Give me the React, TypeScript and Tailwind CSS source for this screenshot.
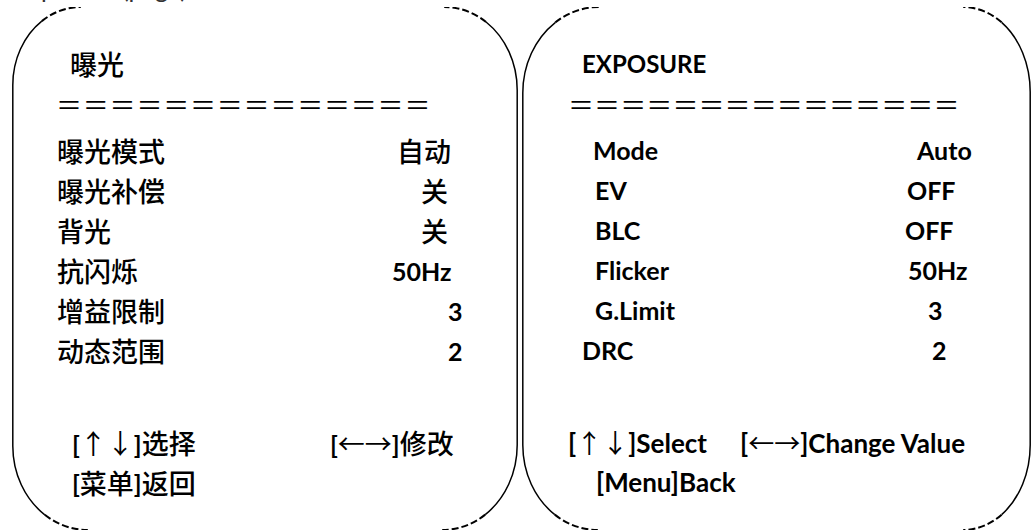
import React from "react";

const LATF = "font-['Lato','Noto_Sans_CJK_SC',sans-serif] font-bold";
const LAT = `${LATF} text-[25px]`;
const CJKF = "font-['Noto_Sans_CJK_SC',sans-serif]";
const CJK = `${CJKF} font-medium text-[27px]`;

type Corner = [number, number];

function pt(cx: number, cy: number, rx: number, ry: number, deg: number) {
  const r = (deg * Math.PI) / 180;
  return [cx + rx * Math.cos(r), cy + ry * Math.sin(r)];
}

function arc(cx: number, cy: number, rx: number, ry: number, a0: number, a1: number) {
  const [x0, y0] = pt(cx, cy, rx, ry, a0);
  const [x1, y1] = pt(cx, cy, rx, ry, a1);
  const sweep = a1 > a0 ? 1 : 0;
  return `M ${x0.toFixed(2)} ${y0.toFixed(2)} A ${rx} ${ry} 0 0 ${sweep} ${x1.toFixed(2)} ${y1.toFixed(2)}`;
}

function Outline({ w, h, tl, tr, bl, br }: { w: number; h: number; tl: Corner; tr: Corner; bl: Corner; br: Corner }) {
  const s = 0.8;
  const L = s;
  const R = w - s;
  const solid = [
    arc(L + tl[0], tl[1], tl[0], tl[1], 180, 235),
    arc(R - tr[0], tr[1], tr[0], tr[1], 360, 305),
    arc(L + bl[0], h - bl[1], bl[0], bl[1], 180, 125),
    arc(R - br[0], h - br[1], br[0], br[1], 0, 55),
    `M ${L} ${tl[1]} L ${L} ${h - bl[1]}`,
    `M ${R} ${tr[1]} L ${R} ${h - br[1]}`,
  ];
  const dashed = [
    arc(L + tl[0], tl[1], tl[0], tl[1], 235, 270),
    arc(R - tr[0], tr[1], tr[0], tr[1], 305, 270),
    arc(L + bl[0], h - bl[1], bl[0], bl[1], 125, 90),
    arc(R - br[0], h - br[1], br[0], br[1], 55, 90),
  ];
  return (
    <svg className="absolute left-0 top-0 pointer-events-none" width={w} height={h} viewBox={`0 0 ${w} ${h}`}>
      {solid.map((d, i) => (
        <path key={i} d={d} fill="none" stroke="#000" strokeWidth={1.5} />
      ))}
      {dashed.map((d, i) => (
        <path key={"d" + i} d={d} fill="none" stroke="#000" strokeWidth={2} strokeDasharray="7 3" />
      ))}
    </svg>
  );
}

const EQ_LEFT = "＝".repeat(14);
const EQ_RIGHT = "＝".repeat(15);

export default function App() {
  return (
    <div className="w-[1031px] h-[531px] bg-white overflow-hidden text-black">
      <div className="h-[7px] overflow-hidden">
        <div className="font-['Lato',sans-serif] text-[25px] text-[#333] leading-[27px] -mt-[25px] pl-[14px]">Exposure (page)</div>
      </div>
      <div className="flex">
        {/* Left panel */}
        <div className="relative w-[506px] h-[523px] ml-[12px] shrink-0">
          <Outline w={506} h={523} tl={[68, 78]} tr={[73, 83]} bl={[75, 84]} br={[75, 85]} />
          <div className="flex flex-col pt-[37px]">
            <div className={`${CJK} h-[40px] leading-[40px] pl-[58px]`}>曝光</div>
            <div className={`${CJKF} font-normal text-[26px] tracking-[0.8px] h-[40px] leading-[40px] pl-[44px]`}>{EQ_LEFT}</div>
            <div className="h-[7px]" />
            <div className="flex h-[40px] leading-[40px] pl-[45px]">
              <span className={`${CJK} w-[340px]`}>曝光模式</span>
              <span className={`${CJK}`}>自动</span>
            </div>
            <div className="flex h-[40px] leading-[40px] pl-[45px]">
              <span className={`${CJK} w-[364px]`}>曝光补偿</span>
              <span className={`${CJK}`}>关</span>
            </div>
            <div className="flex h-[40px] leading-[40px] pl-[45px]">
              <span className={`${CJK} w-[364px]`}>背光</span>
              <span className={`${CJK}`}>关</span>
            </div>
            <div className="flex h-[40px] leading-[40px] pl-[45px]">
              <span className={`${CJK} w-[335px]`}>抗闪烁</span>
              <span className={`${LAT}`}>50Hz</span>
            </div>
            <div className="flex h-[40px] leading-[40px] pl-[45px]">
              <span className={`${CJK} w-[391px]`}>增益限制</span>
              <span className={`${LAT}`}>3</span>
            </div>
            <div className="flex h-[40px] leading-[40px] pl-[45px]">
              <span className={`${CJK} w-[391px]`}>动态范围</span>
              <span className={`${LAT}`}>2</span>
            </div>
            <div className="h-[52px]" />
            <div className="flex h-[40px] leading-[40px] pl-[60px]">
              <span className="w-[258px] whitespace-nowrap">
                <span className={LAT}>[</span>
                <span className={`${CJKF} font-normal text-[27px]`}>↑↓</span>
                <span className={LAT}>]</span>
                <span className={CJK}>选择</span>
              </span>
              <span className="whitespace-nowrap">
                <span className={LAT}>[</span>
                <span className={`${CJKF} font-normal text-[27px]`}>←→</span>
                <span className={LAT}>]</span>
                <span className={CJK}>修改</span>
              </span>
            </div>
            <div className="flex h-[40px] leading-[40px] pl-[60px] whitespace-nowrap">
              <span className={LAT}>[</span>
              <span className={CJK}>菜单</span>
              <span className={LAT}>]</span>
              <span className={CJK}>返回</span>
            </div>
          </div>
        </div>

        {/* Right panel */}
        <div className="relative w-[509px] h-[523px] ml-[4px] shrink-0">
          <Outline w={509} h={523} tl={[76, 86]} tr={[67, 85]} bl={[75, 85]} br={[67, 85]} />
          <div className="flex flex-col pt-[37px]">
            <div className={`${LATF} text-[24px] h-[40px] leading-[40px] pl-[60px]`}>EXPOSURE</div>
            <div className={`${CJKF} font-normal text-[26px] tracking-[0.1px] h-[40px] leading-[40px] pl-[46px]`}>{EQ_RIGHT}</div>
            <div className="h-[6px]" />
            <div className={`flex h-[40px] leading-[40px] pl-[71px] ${LAT}`}>
              <span className="w-[324px]">Mode</span>
              <span>Auto</span>
            </div>
            <div className={`flex h-[40px] leading-[40px] pl-[73px] ${LAT}`}>
              <span className="w-[312px]">EV</span>
              <span>OFF</span>
            </div>
            <div className={`flex h-[40px] leading-[40px] pl-[73px] ${LAT}`}>
              <span className="w-[310px]">BLC</span>
              <span>OFF</span>
            </div>
            <div className={`flex h-[40px] leading-[40px] pl-[73px] ${LAT}`}>
              <span className="w-[313px]">Flicker</span>
              <span>50Hz</span>
            </div>
            <div className={`flex h-[40px] leading-[40px] pl-[73px] ${LAT}`}>
              <span className="w-[333px]">G.Limit</span>
              <span>3</span>
            </div>
            <div className={`flex h-[40px] leading-[40px] pl-[60px] ${LAT}`}>
              <span className="w-[350px]">DRC</span>
              <span>2</span>
            </div>
            <div className="h-[52px]" />
            <div className={`flex h-[40px] leading-[40px] pl-[46px] whitespace-nowrap ${LATF} text-[26px]`}>
              <span className="w-[172px]">
                [<span className={`${CJKF} font-normal text-[26px]`}>↑↓</span>]Select
              </span>
              <span>
                [<span className={`${CJKF} font-normal text-[26px]`}>←→</span>]Change Value
              </span>
            </div>
            <div className={`flex h-[40px] leading-[40px] pl-[74px] ${LATF} text-[26px]`}>[Menu]Back</div>
          </div>
        </div>
      </div>
    </div>
  );
}
